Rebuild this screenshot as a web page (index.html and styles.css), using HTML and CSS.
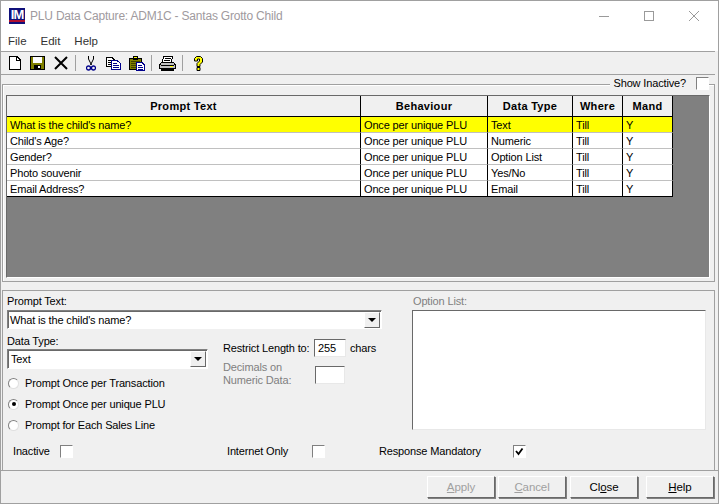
FILE: index.html
```html
<!DOCTYPE html>
<html lang="en">
<head>
<meta charset="utf-8">
<title>PLU Data Capture</title>
<link rel="stylesheet" href="styles.css">
</head>
<body>
<div class="window">
  <header class="titlebar">
    <span class="logo">IM</span>
    <span class="title">PLU Data Capture: ADM1C - Santas Grotto Child</span>
    <div class="winbtns">
      <svg class="winbtn" width="12" height="12" viewBox="0 0 12 12"><path d="M1 6.5H11" stroke="#9a9a9a" fill="none"/></svg>
      <svg class="winbtn" width="12" height="12" viewBox="0 0 12 12"><rect x="1.5" y="1.5" width="9" height="9" stroke="#9a9a9a" fill="none"/></svg>
      <svg class="winbtn" width="12" height="12" viewBox="0 0 12 12"><path d="M1 1L11 11M11 1L1 11" stroke="#9a9a9a" fill="none"/></svg>
    </div>
  </header>
  <nav class="menubar"><span>File</span><span>Edit</span><span>Help</span></nav>
  <div class="toolbar">
    <svg class="tool t-new" width="12" height="14" viewBox="0 0 12 14" shape-rendering="crispEdges"><path d="M.5.5H8L11.5 4V13.5H.5Z" fill="#fff" stroke="#000"/><path d="M7.5.5V4.5H11.5" fill="none" stroke="#000"/></svg>
    <svg class="tool t-save" width="15" height="14" viewBox="0 0 15 14" shape-rendering="crispEdges"><rect width="15" height="14" fill="#000"/><rect x="1" y="1" width="13" height="12" fill="#808000"/><rect x="3" y="1" width="9" height="6" fill="#fff"/><rect x="4" y="9" width="7" height="4" fill="#000"/><rect x="8" y="10" width="2" height="2" fill="#fff"/></svg>
    <svg class="tool t-x" width="14" height="14" viewBox="0 0 14 14"><path d="M1 1L13 13M13 1L1 13" stroke="#000" stroke-width="2" fill="none"/></svg>
    <i class="sep s-a"></i>
    <svg class="tool t-cut" width="10" height="15" viewBox="0 0 10 15"><path d="M2.5 0V3L5.5 9M7.5 0V3L4.5 9" stroke="#000" fill="none"/><circle cx="2.5" cy="12" r="2" stroke="#00008b" stroke-width="1.3" fill="none"/><circle cx="7.5" cy="12" r="2" stroke="#00008b" stroke-width="1.3" fill="none"/></svg>
    <svg class="tool t-copy" width="15" height="13" viewBox="0 0 15 13" shape-rendering="crispEdges"><path d="M.5.5H6L8.5 3V9.5H.5Z" fill="#fff" stroke="#000"/><path d="M2 3H6M2 5H7M2 7H7" stroke="#000"/><path d="M5.5 3.5H11L14.5 6.5V12.5H5.5Z" fill="#fff" stroke="#00008b"/><path d="M7 6H11M7 8H13M7 10H13" stroke="#00008b"/></svg>
    <svg class="tool t-paste" width="16" height="15" viewBox="0 0 16 15" shape-rendering="crispEdges"><rect y="2" width="13" height="12" fill="#000"/><rect x="1" y="3" width="11" height="10" fill="#808000"/><rect x="4" y="0" width="5" height="4" fill="#000"/><rect x="5" y="1" width="3" height="1" fill="#ff0"/><path d="M2 5H11M2 7H7M2 9H7M2 11H7" stroke="#404000"/><path d="M7.5 6.5H13L15.5 9V14.5H7.5Z" fill="#fff" stroke="#00008b"/><path d="M9 9H13M9 11H14M9 13H14" stroke="#00008b"/></svg>
    <i class="sep s-b"></i>
    <svg class="tool t-print" width="17" height="15" viewBox="0 0 17 15" shape-rendering="crispEdges"><path d="M4.5.5H13.5L12.5 6.5H3.5Z" fill="#fff" stroke="#000"/><path d="M6 2H12M5 4H11" stroke="#000"/><path d="M2.5 6.5H14.5L16.5 9V12.5H.5V9Z" fill="#c0c0c0" stroke="#000"/><rect x="2" y="9" width="13" height="1" fill="#000"/><rect x="11" y="10" width="3" height="1" fill="#ff0"/><rect x="2" y="13" width="13" height="2" fill="#000"/></svg>
    <i class="sep s-c"></i>
    <svg class="tool t-help" width="11" height="15" viewBox="0 0 11 15"><path d="M1.5 5V2.5L3.5.5H7.5L9.5 2.5V6L7 8.5V10.5H4V7.5L6.5 5V3H4.5V5ZM4 11.5H7V14.5H4Z" fill="#ff0" stroke="#000"/></svg>
  </div>
  <section class="grid-panel">
    <div class="inactive-flag"><span>Show Inactive?</span><i class="check"></i></div>
    <div class="grid-well">
      <table class="grid">
        <colgroup><col class="c1"><col class="c2"><col class="c3"><col class="c4"><col class="c5"></colgroup>
        <thead><tr><th>Prompt Text</th><th>Behaviour</th><th>Data Type</th><th>Where</th><th>Mand</th></tr></thead>
        <tbody>
          <tr class="selected"><td>What is the child's name?</td><td>Once per unique PLU</td><td>Text</td><td>Till</td><td>Y</td></tr>
          <tr><td>Child's Age?</td><td>Once per unique PLU</td><td>Numeric</td><td>Till</td><td>Y</td></tr>
          <tr><td>Gender?</td><td>Once per unique PLU</td><td>Option List</td><td>Till</td><td>Y</td></tr>
          <tr><td>Photo souvenir</td><td>Once per unique PLU</td><td>Yes/No</td><td>Till</td><td>Y</td></tr>
          <tr><td>Email Address?</td><td>Once per unique PLU</td><td>Email</td><td>Till</td><td>Y</td></tr>
        </tbody>
      </table>
    </div>
  </section>
  <section class="form">
    <div class="form-main">
      <div class="left">
        <label class="lbl">Prompt Text:</label>
        <div class="combo wide"><span>What is the child's name?</span><b class="arrow"></b></div>
        <div class="mid">
          <div class="mid-left">
            <label class="lbl">Data Type:</label>
            <div class="combo small"><span>Text</span><b class="arrow"></b></div>
            <div class="radios">
              <div class="radio"><i class="dot"></i>Prompt Once per Transaction</div>
              <div class="radio"><i class="dot on"></i>Prompt Once per unique PLU</div>
              <div class="radio"><i class="dot"></i>Prompt for Each Sales Line</div>
            </div>
          </div>
          <div class="mid-right">
            <div class="row"><span class="restrict">Restrict Length to:</span><span class="field">255</span><span>chars</span></div>
            <div class="row dec disabled"><span class="two">Decimals on<br>Numeric Data:</span><span class="field blank"></span></div>
          </div>
        </div>
      </div>
      <div class="right">
        <label class="lbl opt disabled">Option List:</label>
        <div class="listbox"></div>
      </div>
    </div>
    <div class="flags">
      <div class="flag f1"><span>Inactive</span><i class="check"></i></div>
      <div class="flag f2"><span>Internet Only</span><i class="check"></i></div>
      <div class="flag f3"><span>Response Mandatory</span><i class="check checked"><svg width="9" height="9" viewBox="0 0 9 9"><path d="M1 4L3.5 7L7.5 1.5" stroke="#000" stroke-width="1.8" fill="none"/></svg></i></div>
    </div>
  </section>
  <footer class="footer">
    <button class="btn off"><u>A</u>pply</button>
    <button class="btn off"><u>C</u>ancel</button>
    <button class="btn gap">Cl<u>o</u>se</button>
    <button class="btn gap2"><u>H</u>elp</button>
  </footer>
</div>
</body>
</html>
```
FILE: styles.css
```css
* { box-sizing: border-box; }
html, body { margin: 0; padding: 0; }
body { width: 719px; height: 504px; overflow: hidden; background: #f0f0f0; font: 11px/14px "Liberation Sans", Arial, sans-serif; letter-spacing: -.15px; color: #000; }
.window { width: 719px; height: 504px; display: flex; flex-direction: column; border: 1px solid #a0a0a0; background: #f0f0f0; }
.titlebar { height: 29px; flex: none; background: #fff; display: flex; align-items: center; padding-left: 8px; }
.logo { width: 16px; height: 16px; background: linear-gradient(#10107a 0 12px, #b01030 12px 14px, #10107a 14px); color: #fff; font: bold 13px/14px "Liberation Sans", sans-serif; letter-spacing: -1px; text-align: center; margin-top: 1px; overflow: hidden; }
.title { margin-left: 5px; color: #a09a9e; font-size: 12px; letter-spacing: -.2px; }
.winbtns { margin-left: auto; display: flex; gap: 33px; padding-right: 18px; }
.menubar { height: 21px; flex: none; background: #fff; display: flex; gap: 14px; padding: 4px 0 0 7px; color: #333; font-size: 11.5px; letter-spacing: 0; }
.toolbar { height: 24px; flex: none; margin-right: 3px; background: #f0f0f0; border-top: 1px solid #a0a0a0; border-bottom: 1px solid #a0a0a0; display: flex; align-items: center; padding-left: 8px; }
.tool { flex: none; }
.t-save { margin-left: 9px; }
.t-x { margin-left: 9px; }
.sep { width: 1px; height: 16px; background: #a0a0a0; flex: none; }
.s-a { margin-left: 7px; }
.t-cut { margin-left: 10px; }
.t-copy { margin-left: 10px; }
.t-paste { margin-left: 8px; }
.s-b { margin-left: 6px; }
.t-print { margin-left: 7px; }
.s-c { margin-left: 6px; }
.t-help { margin-left: 10px; }
.grid-panel { position: relative; flex: none; height: 198px; margin: 9px 3px 0 1px; padding: 10px 4px 0 3px; border: 1px solid #a0a0a0; box-shadow: inset 1px 1px 0 #fff; }
.inactive-flag { position: absolute; right: 5px; top: -9px; display: flex; align-items: center; gap: 10px; background: #f0f0f0; padding: 0 0 0 4px; }
.check { display: inline-block; flex: none; width: 13px; height: 13px; background: #fff; border: 1px solid; border-color: #808080 #fff #fff #808080; position: relative; }
.check.checked svg { position: absolute; left: 1px; top: 1px; }
.grid-well { height: 183px; background: #808080; border: 1px solid; border-color: #696969 #fff #fff #696969; }
.grid { border-collapse: separate; border-spacing: 0; table-layout: fixed; width: 666px; background: #fff; }
.c1 { width: 354px; } .c2 { width: 127px; } .c3 { width: 85px; } .c4 { width: 50px; } .c5 { width: 50px; }
.grid th { height: 21px; padding: 0; background: #f0f0f0; border-right: 1px solid #000; border-bottom: 1px solid #000; font-weight: bold; letter-spacing: .3px; text-align: center; }
.grid td { height: 16px; padding: 0 0 0 3px; border-right: 1px solid #000; border-bottom: 1px solid #c0c0c0; line-height: 14px; white-space: nowrap; overflow: hidden; }
.grid tbody tr:last-child td { border-bottom: 1px solid #000; }
.selected td { background: #ff0; }
.form { flex: 1; margin: 8px 3px 0 1px; border-top: 1px solid #a0a0a0; border-left: 1px solid #a0a0a0; border-right: 1px solid #a0a0a0; padding: 3px 0 0 4px; min-height: 0; display: flex; flex-direction: column; }
.form-main { display: flex; }
.left { width: 375px; flex: none; }
.lbl { display: block; height: 14px; }
.disabled { color: #808080; }
.combo { display: flex; align-items: center; justify-content: space-between; height: 19px; background: #fff; border: 1px solid; border-color: #808080 #fff #fff #808080; box-shadow: inset 1px 1px 0 #696969; padding-left: 2px; }
.wide { width: 375px; margin-top: 2px; }
.small { width: 201px; margin-top: 1px; height: 20px; padding-left: 3px; }
.arrow { width: 16px; height: 16px; margin-right: 1px; background: #f0f0f0; border: 1px solid; border-color: #fff #696969 #696969 #fff; position: relative; }
.arrow::after { content: ""; position: absolute; left: 3px; top: 5px; border: 4px solid transparent; border-top-color: #000; border-bottom: 0; }
.mid { display: flex; margin-top: 5px; }
.mid-left { width: 216px; flex: none; }
.radios { margin-top: 7px; display: flex; flex-direction: column; gap: 7px; }
.radio { display: flex; align-items: center; height: 14px; }
.dot { width: 11px; height: 11px; margin-right: 6px; margin-left: 1px; border-radius: 50%; background: #fff; border: 1px solid; border-color: #808080 #e0e0e0 #e0e0e0 #808080; position: relative; flex: none; }
.dot.on::after { content: ""; position: absolute; left: 2.5px; top: 2.5px; width: 4px; height: 4px; border-radius: 50%; background: #000; }
.mid-right { padding-top: 5px; }
.row { display: flex; align-items: center; gap: 4px; white-space: nowrap; }
.restrict { width: 87px; }
.field { width: 32px; height: 18px; background: #fff; border: 1px solid; border-color: #696969 #e8e8e8 #e8e8e8 #696969; padding-left: 3px; line-height: 16px; }
.row.dec { margin-top: 4px; align-items: flex-start; }
.two { width: 88px; line-height: 13px; }
.blank { width: 30px; margin-top: 5px; }
.right { width: 294px; margin-left: 30px; }
.opt { padding-left: 1px; }
.listbox { width: 294px; height: 120px; margin-top: 2px; background: #fff; border: 1px solid; border-color: #696969 #e8e8e8 #e8e8e8 #696969; }
.flags { display: flex; margin-top: 10px; align-items: center; height: 18px; }
.flag { display: flex; align-items: center; }
.f1 { margin-left: 6px; } .f1 span { width: 47px; }
.f2 { margin-left: 154px; } .f2 span { width: 85px; }
.f3 { margin-left: 54px; } .f3 span { width: 134px; }
.footer { height: 33px; flex: none; border-top: 1px solid #a0a0a0; display: flex; padding: 5px 0 0 426px; gap: 3px; }
.btn { width: 68px; height: 22px; padding: 0; background: #f0f0f0; border: 1px solid; border-color: #fff #696969 #696969 #fff; box-shadow: 1px 1px 0 #808080; font: 11.5px "Liberation Sans", sans-serif; letter-spacing: -.1px; color: #000; }
.btn.off { color: #a0a0a0; }
.gap { margin-left: 1px; }
.gap2 { margin-left: 5px; }
```
